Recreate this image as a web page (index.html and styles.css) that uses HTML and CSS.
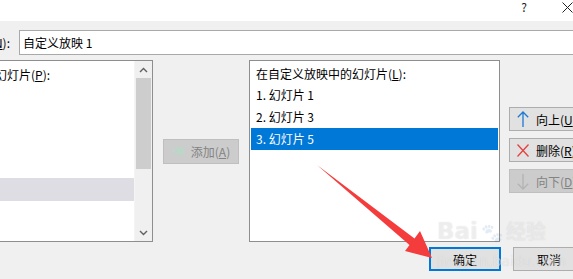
FILE: index.html
```html
<!DOCTYPE html>
<html lang="zh-CN">
<head>
    <meta charset="UTF-8">
    <title>定义自定义放映</title>
    <link rel="stylesheet" href="styles.css">
</head>
<body>
    <div class="titlebar">
        <span class="help">?</span>
        <span class="close">
            <svg width="11" height="11" viewBox="0 0 11 11"><path d="M0.5 0.5 L10.5 10.5 M10.5 0.5 L0.5 10.5" stroke="#222" stroke-width="1" fill="none"/></svg>
        </span>
    </div>

    <div class="dialog">
        <div class="name-row">
            <label class="name-label">幻灯片放映名称(<u>N</u>):</label>
            <div class="textbox">自定义放映 1</div>
        </div>

        <div class="lists-row">
            <div class="listbox source">
                <div class="list-content">
                    <div class="list-label">在演示文稿中的幻灯片(<u>P</u>):</div>
                    <div class="item">1. 幻灯片 1</div>
                    <div class="item">2. 幻灯片 2</div>
                    <div class="item">3. 幻灯片 3</div>
                    <div class="item">4. 幻灯片 4</div>
                    <div class="item inactive">5. 幻灯片 5</div>
                    <div class="item">6. 幻灯片 6</div>
                </div>
                <div class="scrollbar">
                    <div class="scroll-btn">
                        <svg width="9" height="6" viewBox="0 0 9 6"><polyline points="1,5 4.5,1.5 8,5" stroke="#606060" stroke-width="1.4" fill="none"/></svg>
                    </div>
                    <div class="scroll-thumb"></div>
                    <div class="scroll-track"></div>
                    <div class="scroll-btn">
                        <svg width="9" height="6" viewBox="0 0 9 6"><polyline points="1,1 4.5,4.5 8,1" stroke="#606060" stroke-width="1.4" fill="none"/></svg>
                    </div>
                </div>
            </div>

            <div class="mid">
                <button class="btn add" disabled>
                    <svg width="14" height="8" viewBox="0 0 14 8">
                        <rect x="0" y="2.5" width="3" height="3" fill="#b9d8c8"/>
                        <polygon points="3,0 6,0 9,4 6,8 3,8 6,4" fill="#b9d8c8"/>
                        <polygon points="7,0 10,0 13,4 10,8 7,8 10,4" fill="#b9d8c8"/>
                    </svg>
                    <span>添加(<u>A</u>)</span>
                </button>
            </div>

            <div class="listbox target">
                <div class="list-label">在自定义放映中的幻灯片(<u>L</u>):</div>
                <div class="item">1. 幻灯片 1</div>
                <div class="item">2. 幻灯片 3</div>
                <div class="item selected">3. 幻灯片 5</div>
            </div>

            <div class="side">
                <button class="btn side-btn">
                    <svg width="12" height="17" viewBox="0 0 12 17"><path d="M6 1 V16 M0.8 6.2 L6 1 L11.2 6.2" stroke="#1c7ad4" stroke-width="1.3" fill="none"/></svg>
                    <span>向上(<u>U</u>)</span>
                </button>
                <button class="btn side-btn">
                    <svg width="12" height="13" viewBox="0 0 12 13"><path d="M0.5 0.5 L11.5 12.5 M11.5 0.5 L0.5 12.5" stroke="#e64141" stroke-width="1.3" fill="none"/></svg>
                    <span>删除(<u>R</u>)</span>
                </button>
                <button class="btn side-btn" disabled>
                    <svg width="12" height="17" viewBox="0 0 12 17"><path d="M6 1 V16 M0.8 10.8 L6 16 L11.2 10.8" stroke="#b3b3b3" stroke-width="1.3" fill="none"/></svg>
                    <span>向下(<u>D</u>)</span>
                </button>
            </div>
        </div>

        <div class="footer">
            <button class="btn ok">确定</button>
            <button class="btn">取消</button>
        </div>
    </div>

    <svg class="pointer" width="573" height="279" viewBox="0 0 573 279">
        <polygon points="317,165 414.5,238.5 420,231 432,258 405,251 409.5,245" fill="#f43c3c"/>
    </svg>

    <div class="watermark">
        <div class="wm-logo">Bai<span class="paw">&#x1F43E;</span><span class="wm-cn">经验</span></div>
        <div class="wm-url">jingyan.baidu.com</div>
    </div>
</body>
</html>
```

FILE: styles.css
```css
body {
    margin: 0;
    width: 573px;
    height: 279px;
    overflow: hidden;
    position: relative;
    background-color: #f0f0f0;
    font-family: "Noto Sans CJK SC", "Microsoft YaHei", sans-serif;
    font-size: 12px;
    color: #000;
}
u {
    text-decoration: underline;
    text-underline-offset: 1px;
}
.titlebar {
    height: 21px;
    background-color: #fff;
    display: flex;
    justify-content: flex-end;
    align-items: flex-start;
}
.help {
    font-size: 12px;
    line-height: 14px;
    color: #222;
    margin-right: 35px;
}
.close {
    width: 11px;
    height: 11px;
    margin-top: 2px;
    display: flex;
}
.dialog {
    margin-left: -96px;
    width: 692px;
    padding-top: 9px;
}
.name-row {
    display: flex;
    align-items: center;
    height: 25px;
}
.name-label {
    width: 106px;
    text-align: right;
    white-space: nowrap;
    margin-right: 9px;
}
.textbox {
    flex: 1;
    height: 25px;
    box-sizing: border-box;
    border: 1px solid #a9a9a9;
    background-color: #fff;
    padding-left: 3px;
    line-height: 23px;
    white-space: nowrap;
}
.lists-row {
    display: flex;
    margin-top: 5px;
    height: 182px;
}
.listbox {
    box-sizing: border-box;
    border: 1px solid #8e8e8e;
    background-color: #fff;
    height: 182px;
    overflow: hidden;
}
.listbox.source {
    width: 249px;
    display: flex;
}
.list-content {
    flex: 1;
    overflow: hidden;
    padding-top: 2px;
}
.source .list-label,
.source .item {
    height: 23px;
    line-height: 23px;
    padding-left: 6px;
    white-space: nowrap;
}
.source .item.inactive {
    background-color: #dedde3;
}
.scrollbar {
    width: 17px;
    background-color: #f0f0f0;
    display: flex;
    flex-direction: column;
    border-left: 1px solid #f4f4f4;
}
.scroll-btn {
    height: 17px;
    display: flex;
    align-items: center;
    justify-content: center;
}
.scroll-thumb {
    height: 91px;
    margin: 0 1px;
    background-color: #cdcdcd;
}
.scroll-track {
    flex: 1;
}
.mid {
    width: 96px;
    display: flex;
    align-items: center;
    justify-content: center;
}
.btn {
    font-family: inherit;
    font-size: 12px;
    color: #000;
    height: 24px;
    box-sizing: border-box;
    background-color: #e1e1e1;
    border: 1px solid #adadad;
    border-radius: 0;
    padding: 0;
    display: flex;
    align-items: center;
    justify-content: center;
    white-space: nowrap;
}
.btn svg {
    flex-shrink: 0;
}
.btn:disabled {
    background-color: #cccccc;
    border-color: #bfbfbf;
    color: #838383;
}
.btn.add {
    width: 76px;
    height: 25px;
    gap: 5px;
}
.listbox.target {
    width: 251px;
    padding: 0 1px;
}
.target .list-label {
    height: 23px;
    line-height: 25px;
    padding-left: 5px;
    white-space: nowrap;
}
.target .item {
    height: 22px;
    line-height: 22px;
    padding-left: 5px;
    white-space: nowrap;
}
.target .item.selected {
    background-color: #0078d7;
    color: #fff;
}
.side {
    margin-left: 9px;
    padding-top: 47px;
    display: flex;
    flex-direction: column;
    gap: 7px;
}
.side-btn {
    width: 76px;
    justify-content: flex-start;
    padding-left: 7px;
    gap: 7px;
}
.footer {
    display: flex;
    justify-content: flex-end;
    gap: 12px;
    margin-top: 5px;
    padding-right: 11px;
}
.footer .btn {
    width: 72px;
}
.btn.ok {
    border: 2px solid #0078d7;
}
.pointer {
    position: absolute;
    left: 0;
    top: 0;
    pointer-events: none;
}
.watermark {
    position: absolute;
    left: 437px;
    top: 216px;
    color: rgba(255, 255, 255, 0.5);
    text-shadow: 0 0 1px rgba(0, 0, 0, 0.14);
    pointer-events: none;
    font-family: "DejaVu Sans", sans-serif;
}
.wm-logo {
    font-size: 23px;
    font-weight: bold;
    line-height: 30px;
    white-space: nowrap;
}
.paw {
    font-size: 18px;
    opacity: 0.2;
    margin: 0 3px;
}
.wm-cn {
    font-family: "Noto Sans CJK SC", sans-serif;
    font-size: 20px;
}
.wm-url {
    font-size: 14px;
    line-height: 18px;
    margin-top: 4px;
}
```
